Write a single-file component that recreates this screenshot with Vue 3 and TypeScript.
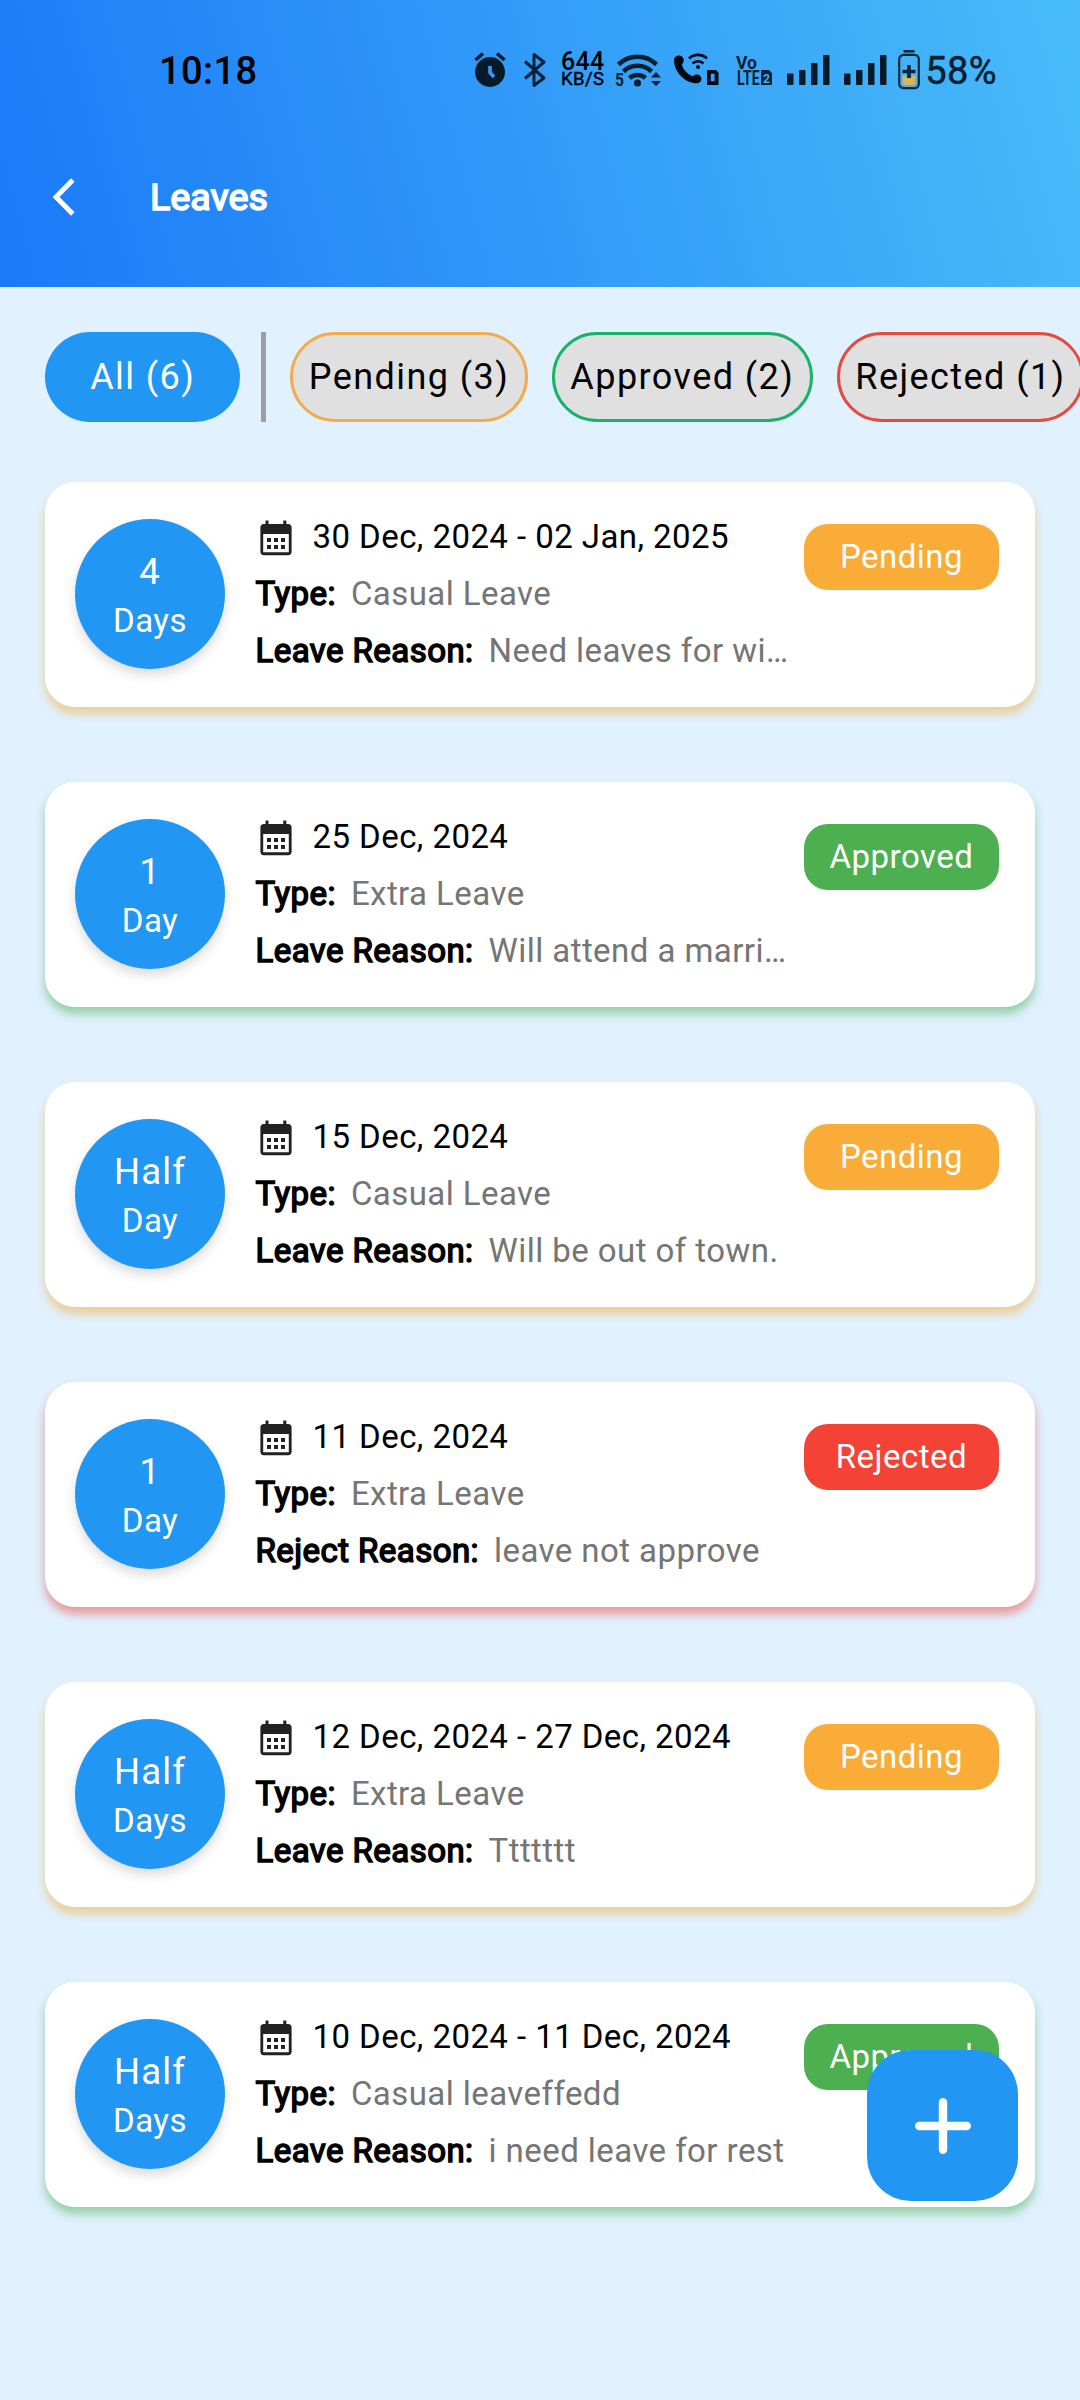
<script setup lang="ts">
type Status = 'pending' | 'approved' | 'rejected'

interface Leave {
  count: string
  unit: string
  date: string
  type: string
  reasonLabel: string
  reason: string
  status: Status
}

const statusLabels: Record<Status, string> = {
  pending: 'Pending',
  approved: 'Approved',
  rejected: 'Rejected',
}

const filters: { label: string; status: Status }[] = [
  { label: 'Pending (3)', status: 'pending' },
  { label: 'Approved (2)', status: 'approved' },
  { label: 'Rejected (1)', status: 'rejected' },
]

const leaves: Leave[] = [
  { count: '4', unit: 'Days', date: '30 Dec, 2024 - 02 Jan, 2025', type: 'Casual Leave', reasonLabel: 'Leave Reason:', reason: 'Need leaves for wi…', status: 'pending' },
  { count: '1', unit: 'Day', date: '25 Dec, 2024', type: 'Extra Leave', reasonLabel: 'Leave Reason:', reason: 'Will attend a marri…', status: 'approved' },
  { count: 'Half', unit: 'Day', date: '15 Dec, 2024', type: 'Casual Leave', reasonLabel: 'Leave Reason:', reason: 'Will be out of town.', status: 'pending' },
  { count: '1', unit: 'Day', date: '11 Dec, 2024', type: 'Extra Leave', reasonLabel: 'Reject Reason:', reason: 'leave not approve', status: 'rejected' },
  { count: 'Half', unit: 'Days', date: '12 Dec, 2024 - 27 Dec, 2024', type: 'Extra Leave', reasonLabel: 'Leave Reason:', reason: 'Ttttttt', status: 'pending' },
  { count: 'Half', unit: 'Days', date: '10 Dec, 2024 - 11 Dec, 2024', type: 'Casual leaveffedd', reasonLabel: 'Leave Reason:', reason: 'i need leave for rest', status: 'approved' },
]
</script>

<template>
  <div class="screen">
    <header class="header">
      <div class="status-bar">
        <span class="clock">10:18</span>
        <div class="indicators">
          <svg class="alarm" width="32" height="36" viewBox="0 0 32 36">
            <circle cx="16" cy="20" r="15" fill="#061b2a" />
            <path d="M1.5 8 9 1.5M30.500 8 23 1.500" stroke="#061b2a" stroke-width="3.600" fill="none" />
            <path d="M16 14v6.500l4 4.500" stroke="#3399fa" stroke-width="3.600" fill="none" />
          </svg>
          <svg class="bluetooth" width="22" height="36" viewBox="0 0 22 36">
            <path d="M1 9.500 20 26 10 33.500V2.500l10 7.500L1 26.500" fill="none" stroke="#062139" stroke-width="3" stroke-linejoin="round" />
          </svg>
          <div class="speed"><span class="rate">644</span><span class="rate-unit">KB/S</span></div>
          <svg class="wifi" width="47" height="36" viewBox="0 0 47 36">
            <g fill="none" stroke="#061f30" stroke-width="4.600">
              <path d="M3.500 12.500a27 27 0 0 1 38 0" />
              <path d="M8.500 19.500a20 20 0 0 1 28 0" />
              <path d="M14.500 26a12 12 0 0 1 16 0" />
            </g>
            <circle cx="22.500" cy="31" r="3.600" fill="#061f30" />
            <path d="m36 25.500 5-5.500 5 5.500zM36 29h10l-5 5z" fill="#061f30" />
            <text x="0" y="34" font-size="18.500" font-weight="700" textLength="9" lengthAdjust="spacingAndGlyphs" fill="#061f30">5</text>
          </svg>
          <svg class="call" width="46" height="36" viewBox="0 0 46 36">
            <path d="M1 8c0-2.500 2.500-4.500 5-4.500 2.800 0 4.800 2.200 4.800 4.800 0 1.800-.8 3-2 4 1.500 5.500 5.500 10 11 12 1-1.200 2.500-1.800 4-1.800 2.700 0 4.600 2 4.600 4.500 0 2.400-2 4.300-4.600 4.300C12.500 31.300 1 20.500 1 8z" fill="#000814" />
            <g fill="none" stroke="#000814" stroke-width="2.600">
              <path d="M16 6.500a13 13 0 0 1 18 0" />
              <path d="M19.500 11.500a8 8 0 0 1 11 0" />
            </g>
            <circle cx="25" cy="15" r="2" fill="#000814" />
            <path d="M34 18h9l2.500 2.500V33H34zM37.800 21.800v7.500h3.800v-7.500z" fill="#000814" fill-rule="evenodd" />
          </svg>
          <svg class="volte" width="37" height="34" viewBox="0 0 37 34">
            <text x="0" y="15.500" font-size="18.500" font-weight="700" textLength="21" lengthAdjust="spacingAndGlyphs" fill="#062234">Vo</text>
            <text x="1" y="32" font-size="19.500" font-weight="700" textLength="22.500" lengthAdjust="spacingAndGlyphs" fill="#062234">LTE</text>
            <path d="M25 17h8l3 3v12H25z" fill="#062234" />
            <text x="27" y="30" font-size="13.500" font-weight="700" textLength="7" lengthAdjust="spacingAndGlyphs" fill="#40adfa">2</text>
          </svg>
          <svg v-for="n in 2" :key="n" class="signal" width="43" height="30" viewBox="0 0 43 30">
            <g fill="#061b2a">
              <rect x="0" y="18.500" width="6.500" height="11.500" rx="1" />
              <rect x="12" y="15" width="6.500" height="15" rx="1" />
              <rect x="24" y="8" width="6.500" height="22" rx="1" />
              <rect x="36" y="0" width="6.500" height="30" rx="1" />
            </g>
          </svg>
          <svg class="battery" width="22" height="40" viewBox="0 0 22 40">
            <rect x="5.500" y="0" width="11" height="2.600" fill="#06263a" />
            <rect x="1.200" y="4.800" width="19.600" height="33.400" rx="4.500" fill="none" stroke="#06263a" stroke-width="2.200" />
            <path d="M4.500 25.500h13V33a2 2 0 0 1-2 2h-9a2 2 0 0 1-2-2z" fill="#dcb452" />
            <path d="M11 15v13M4.500 21.500h13" stroke="#62b4dc" stroke-width="6" />
            <path d="M11 15v13M4.500 21.500h13" stroke="#06263a" stroke-width="3.600" />
          </svg>
          <span class="percent">58%</span>
        </div>
      </div>
      <div class="app-bar">
        <svg class="back" width="22" height="38" viewBox="0 0 22 38">
          <path d="M19.800 2 3 19l16.800 17" fill="none" stroke="#fff" stroke-width="5" />
        </svg>
        <h1 class="title">Leaves</h1>
      </div>
    </header>

    <nav class="filters">
      <div class="chip chip-all">All (6)</div>
      <div class="divider"></div>
      <div v-for="f in filters" :key="f.status" class="chip" :class="f.status">{{ f.label }}</div>
    </nav>

    <main class="list">
      <article v-for="(leave, i) in leaves" :key="i" class="card" :class="leave.status">
        <div class="circle">
          <span class="count">{{ leave.count }}</span>
          <span class="unit">{{ leave.unit }}</span>
        </div>
        <div class="details">
          <div class="row">
            <svg class="calendar" width="32" height="36" viewBox="0 0 32 36">
              <path d="M5.500.5h3V4h14.800V.5h3V4H28a3.600 3.600 0 0 1 3.600 3.600v24A3.600 3.600 0 0 1 28 35.200H4a3.600 3.600 0 0 1-3.600-3.600v-24A3.600 3.600 0 0 1 4 4h1.500zM3.200 14v18.300h25.600V14z" fill="#222" fill-rule="evenodd" />
              <path d="M7 18h4v4H7zm7 0h4v4h-4zm7 0h4v4h-4zM7 25h4v4H7zm7 0h4v4h-4zm7 0h4v4h-4z" fill="#222" />
            </svg>
            <span class="date">{{ leave.date }}</span>
          </div>
          <div class="row"><b class="label">Type:</b><span class="value">{{ leave.type }}</span></div>
          <div class="row"><b class="label">{{ leave.reasonLabel }}</b><span class="value">{{ leave.reason }}</span></div>
        </div>
        <span class="badge">{{ statusLabels[leave.status] }}</span>
      </article>
    </main>

    <button class="fab" aria-label="Add leave">
      <svg width="56" height="56" viewBox="0 0 56 56">
        <path d="M28 4.200v47.600M4.200 28h47.600" stroke="#fff" stroke-width="8.400" stroke-linecap="round" />
      </svg>
    </button>
  </div>
</template>

<style>
body {
  margin: 0;
}
</style>

<style scoped>
.screen {
  position: relative;
  width: 1080px;
  height: 2400px;
  overflow: hidden;
  background: #e1f1ff;
  font-family: Roboto, sans-serif;
  color: #000;
}
.header {
  height: 287px;
  background: linear-gradient(75.1deg, #1a7af8, #49bcf9);
}
.status-bar {
  display: flex;
  justify-content: space-between;
  height: 139px;
  padding: 0 83px 0 159px;
  align-items: center;
}
.clock,
.percent {
  font-size: 38px;
  line-height: 44px;
  font-weight: 500;
  letter-spacing: 0.4px;
  padding-top: 2px;
}
.percent {
  margin-left: 5px;
  color: #06202f;
  font-weight: 400;
  -webkit-text-stroke: 0.5px #06202f;
}
.indicators {
  display: flex;
  align-items: center;
}
.indicators svg {
  flex: none;
  overflow: visible;
}
.bluetooth {
  margin-left: 18px;
}
.speed {
  display: flex;
  flex-direction: column;
  align-items: center;
  width: 45px;
  margin-left: 14.5px;
  font-weight: 500;
  white-space: nowrap;
}
.rate {
  font-size: 25px;
  line-height: 19px;
  letter-spacing: 0.3px;
}
.rate-unit {
  font-size: 18.5px;
  line-height: 16px;
  font-weight: 400;
  letter-spacing: 0.4px;
  -webkit-text-stroke: 0.4px #000;
}
.wifi {
  margin-left: 10px;
}
.call {
  margin-left: 11px;
}
.volte {
  margin-left: 17px;
}
.signal {
  margin-left: 14px;
}
.battery {
  margin-left: 11px;
}
.app-bar {
  display: flex;
  align-items: center;
  height: 116px;
  padding-left: 53px;
}
.title {
  margin: 0 0 0 75px;
  font-size: 37.7px;
  line-height: 44px;
  font-weight: 400;
  color: #fff;
  -webkit-text-stroke: 1.6px #fff;
}
.filters {
  display: flex;
  height: 90px;
  margin: 45px 0 0 45px;
}
.chip {
  flex: none;
  box-sizing: border-box;
  height: 90px;
  padding: 0 15.4px 0 15.8px;
  margin-right: 24px;
  border: 3px solid var(--outline);
  border-radius: 45px;
  background: #e0e0e0;
  font-size: 36px;
  line-height: 84px;
  letter-spacing: 1.43px;
  text-align: center;
  white-space: nowrap;
}
.chip-all {
  width: 195px;
  margin-right: 21px;
  border: 0;
  line-height: 90px;
  background: #2196f3;
  color: #fff;
}
.divider {
  flex: none;
  width: 4.500px;
  margin-right: 24.500px;
  background: #9e9e9e;
}
.pending {
  --outline: #f0ad4e;
  --tone: #f9ad38;
  --glow: rgba(249, 168, 37, 0.48);
}
.approved {
  --outline: #18b368;
  --tone: #4caf50;
  --glow: rgba(76, 175, 80, 0.5);
}
.rejected {
  --outline: #e34b40;
  --tone: #f44336;
  --glow: rgba(244, 67, 54, 0.5);
}
.list {
  display: flex;
  flex-direction: column;
  gap: 75px;
  padding: 60px 45px 0;
}
.card {
  display: flex;
  height: 225px;
  box-sizing: border-box;
  padding: 37px 36px 0 30px;
  border-radius: 30px;
  background: #fff;
  box-shadow: 0 7px 10px var(--glow);
}
.circle {
  flex: none;
  display: flex;
  flex-direction: column;
  align-items: center;
  box-sizing: border-box;
  width: 150px;
  height: 150px;
  padding-top: 28px;
  border-radius: 50%;
  background: #2196f3;
  box-shadow: 0 6px 12px rgba(0, 0, 0, 0.14);
  color: #fff;
}
.count {
  font-size: 36.5px;
  line-height: 49px;
  letter-spacing: 1.1px;
}
.unit {
  font-size: 33px;
  line-height: 49px;
  letter-spacing: 0.5px;
}
.details {
  flex: 1;
  min-width: 0;
  margin: -11px 0 0 30.5px;
}
.row {
  display: flex;
  align-items: center;
  height: 57px;
  font-size: 33px;
  line-height: 57px;
  letter-spacing: 0.44px;
  white-space: nowrap;
}
.calendar {
  margin: 2px 0 0 4.5px;
}
.date {
  margin-left: 20.5px;
}
.label {
  font-weight: 400;
  -webkit-text-stroke: 1.5px #000;
}
.value {
  margin-left: 15px;
  color: #757575;
}
.badge {
  flex: none;
  width: 195px;
  height: 66px;
  margin-top: 5px;
  border-radius: 24px;
  background: var(--tone);
  color: #fff;
  font-size: 33px;
  line-height: 66px;
  letter-spacing: 0.5px;
  text-align: center;
}
.fab {
  position: absolute;
  left: 867px;
  top: 2050px;
  display: flex;
  align-items: center;
  justify-content: center;
  width: 151px;
  height: 151px;
  padding: 0;
  border: 0;
  border-radius: 44px;
  background: #2196f3;
}
</style>
